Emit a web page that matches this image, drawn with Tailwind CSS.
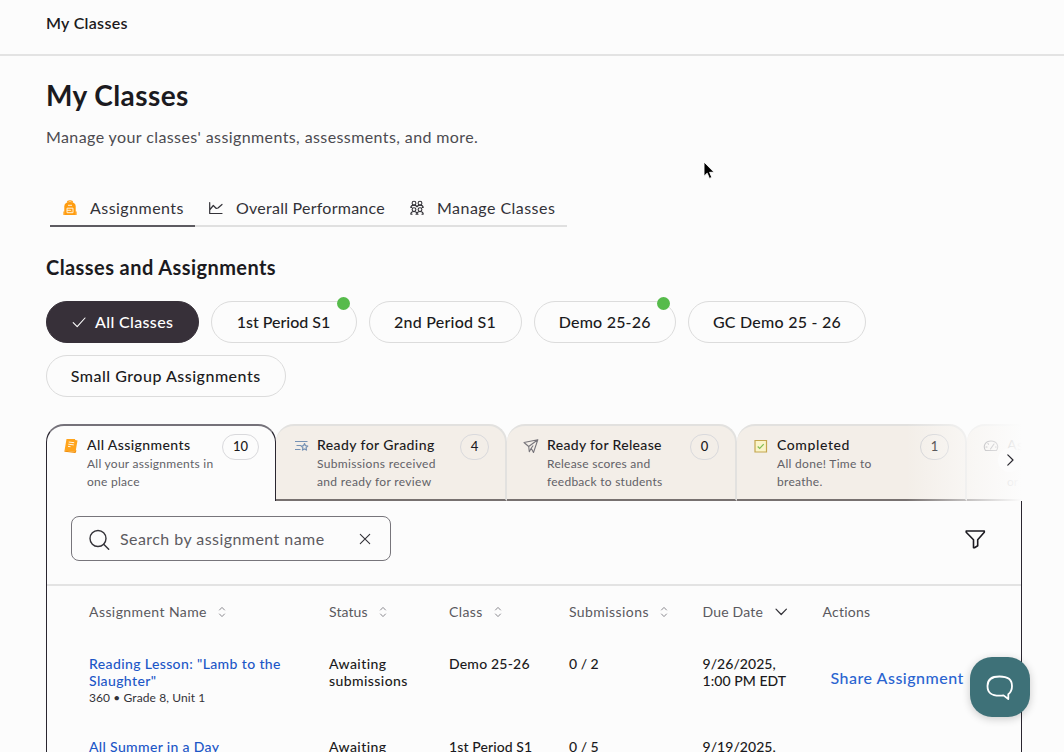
<!DOCTYPE html>
<html lang="en">
  <head>
    <meta charset="UTF-8" />
    <title>My Classes</title>
    <meta name="viewport" content="width=device-width, initial-scale=1.0" />
    <script src="https://cdn.jsdelivr.net/npm/@tailwindcss/browser@4"></script>
  </head>
  <body class="relative h-[752px] overflow-hidden bg-[#fcfcfc] font-['Lato',sans-serif] text-[#1b1a20]">
    <header class="flex h-14 items-center border-b-2 border-[#e3e3e3] pb-2 pl-[46px]">
      <span class="text-base font-semibold tracking-[0.3px]">My Classes</span>
    </header>

    <main class="h-[696px] overflow-hidden pl-[46px]">
      <h1 class="mt-[21px] text-[28px] leading-9 font-bold tracking-[0.42px]">My Classes</h1>
      <p class="mt-3 text-base leading-6 tracking-[0.4px] text-[#4c4b50]">Manage your classes' assignments, assessments, and more.</p>

      <!-- Section tabs -->
      <nav class="mt-[41.500px] ml-1 flex h-9 w-[516.500px] text-base text-[#333238]">
        <a class="flex w-[145px] items-center border-b-2 border-[#5d5b61] pl-3">
          <svg class="h-4 w-4" viewBox="0 0 16 16" fill="none">
            <path d="M5.500 2.500C5.500 1.200 6.500.8 8 .8s2.500.4 2.500 1.700" stroke="#ff9c0f" stroke-width="1.200" />
            <path d="M2.300 6.500C2.300 3.500 4.300 2 8 2s5.700 1.500 5.700 4.500V15H2.300z" fill="#ff9c0f" />
            <path d="M2 11.500v3.500M14 11.500v3.500" stroke="#ff9c0f" stroke-width="1.200" />
            <path d="M6 5.300h4M5 8.200h6v4.500H5zM5 10.300h3.500l.8.900" stroke="#fff3dc" stroke-width="1" />
          </svg>
          <span class="ml-3 tracking-[0.46px]">Assignments</span>
        </a>
        <a class="flex w-[201px] items-center border-b-2 border-[#e0e0e0] pl-[13px]">
          <svg class="h-4 w-4" viewBox="0 0 16 16" fill="none" stroke="#333238" stroke-width="1.200" stroke-linecap="round" stroke-linejoin="round">
            <path d="M1.700 2.500v11h12.300M2 9.500l3.300-4 3 3 1.700-.5 4-3.500" />
          </svg>
          <span class="ml-3 tracking-[0.25px]">Overall Performance</span>
        </a>
        <a class="flex w-[170.500px] items-center border-b-2 border-[#e0e0e0] pl-[13px]">
          <svg class="h-4 w-4" viewBox="0 0 16 16" fill="none" stroke="#333238" stroke-width="1.100">
            <circle cx="5" cy="3.200" r="1.900" /><circle cx="11" cy="3.200" r="1.900" />
            <path d="M1.700 7.700c.2-1.700 1.400-2.600 3.300-2.600s2.800.7 3 2.100c.2-1.400 1.100-2.100 3-2.100s3.100.9 3.300 2.600M1.500 7.500h1.700M12.800 7.500h1.700" />
            <circle cx="5" cy="9.600" r="1.900" /><circle cx="11" cy="9.600" r="1.900" />
            <path d="M1.700 14.300c.2-1.900 1.400-2.800 3.300-2.800s2.800.8 3 2.300c.2-1.500 1.100-2.300 3-2.300s3.100.9 3.300 2.800M1.500 14.300h2M12.500 14.300h2M6.500 14.300h3" />
          </svg>
          <span class="ml-3 tracking-[0.46px]">Manage Classes</span>
        </a>
      </nav>

      <h2 class="mt-[25.500px] text-xl leading-[30px] font-bold tracking-[0.42px]">Classes and Assignments</h2>

      <!-- Class filter pills -->
      <div class="mt-[18.500px] flex w-[900px] flex-wrap gap-x-3 gap-y-3 text-base font-medium">
        <button class="flex h-[42px] w-[152.500px] items-center rounded-full border border-[#373039] bg-[#373039] pl-6 text-white">
          <svg class="h-4 w-4" viewBox="0 0 16 16" fill="none" stroke="#fff" stroke-width="1.100" stroke-linecap="round" stroke-linejoin="round"><path d="M2.200 8.600l4 4L14 4" /></svg>
          <span class="ml-2 tracking-[0.36px]">All Classes</span>
        </button>
        <button class="relative h-[42px] w-[146px] rounded-full border border-[#dcdcdc]">
          1st Period S1
          <span class="absolute -top-[5px] right-[6px] h-[13px] w-[13px] rounded-full bg-[#56bb4b]"></span>
        </button>
        <button class="h-[42px] w-[153px] rounded-full border border-[#dcdcdc] tracking-[0.25px]">2nd Period S1</button>
        <button class="relative h-[42px] w-[142.500px] rounded-full border border-[#dcdcdc] tracking-[0.2px]">
          Demo 25-26
          <span class="absolute -top-[5px] right-[5px] h-[13px] w-[13px] rounded-full bg-[#56bb4b]"></span>
        </button>
        <button class="h-[42px] w-[178px] rounded-full border border-[#dcdcdc] tracking-[0.25px]">GC Demo 25 - 26</button>
        <button class="h-[42px] w-[239.500px] rounded-full border border-[#dcdcdc] tracking-[0.5px]">Small Group Assignments</button>
      </div>

      <!-- Status cards -->
      <div class="relative mt-[27.500px] h-[76.500px] w-[976px] overflow-hidden">
        <div class="flex h-full w-[1150px]">
          <div class="flex w-[230px] shrink-0 rounded-t-[18px] border-x border-t-2 border-x-[#2a2630] border-t-[#75727a] pt-[9px] pl-4">
            <svg class="mt-[3px] h-4 w-4" viewBox="0 0 16 16" fill="none">
              <path d="M3.500 1h8.500l.2 1 2.300.5-2 11.500-11-1.200z" fill="#ffa41c" />
              <path d="M1.400 13.200l11 1.300.5-2.200" stroke="#f28b00" />
              <path d="M5.700 4l5.500.7M5.300 6.200l5.500.7M5 8.400l2.500.3" stroke="#fff6e6" />
            </svg>
            <div class="ml-2 w-[134px]">
              <h3 class="text-sm leading-5 font-medium tracking-[0.4px]">All Assignments</h3>
              <p class="text-xs leading-[18px] tracking-[0.26px] text-[#626167]">All your assignments in<br />one place</p>
            </div>
            <span class="-mt-px ml-px flex h-[26px] w-[37px] items-center justify-center rounded-full border border-[#d9d9dc] text-[13px] font-medium">10</span>
          </div>

          <div class="flex w-[230.500px] shrink-0 rounded-t-[18px] border-r-2 border-t-2 border-[#e2e1df] border-b-2 border-b-[#777170] bg-[#f3eee8] pt-[9px] pl-[17px]">
            <svg class="mt-[3px] h-4 w-4" viewBox="0 0 16 16" fill="none" stroke="#7692b4" stroke-width="1.200" stroke-linejoin="round">
              <path d="M2 3.500h12.500M3.500 7.500h4.500M2 11.500h5.500" />
              <path d="M11.500 5.500l1 2.200 2.300.3-1.700 1.700.4 2.400-2-1.200-2 1.200.4-2.400L8.200 8l2.300-.3z" />
            </svg>
            <div class="ml-2 w-[134px]">
              <h3 class="text-sm leading-5 font-medium tracking-[0.41px]">Ready for Grading</h3>
              <p class="text-xs leading-[18px] tracking-[0.34px] text-[#626167]">Submissions received<br />and ready for review</p>
            </div>
            <span class="-mt-px ml-[9px] flex h-[26px] w-[29px] items-center justify-center rounded-full border border-[#d9d9dc] text-[13px] font-medium">4</span>
          </div>

          <div class="flex w-[230px] shrink-0 rounded-t-[18px] border-r-2 border-t-2 border-[#e2e1df] border-b-2 border-b-[#777170] bg-[#f3eee8] pt-[9px] pl-[16.500px]">
            <svg class="mt-[3px] h-4 w-4" viewBox="0 0 16 16" fill="none" stroke="#77757b" stroke-width="1.100" stroke-linejoin="round">
              <path d="M14.800 1.700L1 4.500l4.700 4zM14.800 1.700L10.500 14.500l-2.300-4.200M5.700 8.500l.6 5.300 1.900-3.500 2-2.800" />
            </svg>
            <div class="ml-2 w-[134px]">
              <h3 class="text-sm leading-5 font-medium tracking-[0.33px]">Ready for Release</h3>
              <p class="text-xs leading-[18px] tracking-[0.25px] text-[#626167]">Release scores and<br />feedback to students</p>
            </div>
            <span class="-mt-px ml-[9px] flex h-[26px] w-[29px] items-center justify-center rounded-full border border-[#d9d9dc] text-[13px] font-medium">0</span>
          </div>

          <div class="flex w-[230px] shrink-0 rounded-t-[18px] border-r-2 border-t-2 border-[#e2e1df] border-b-2 border-b-[#777170] bg-[#f3eee8] pt-[9px] pl-[16.500px]">
            <svg class="mt-[3px] h-4 w-4" viewBox="0 0 16 16" fill="none">
              <path d="M2 2.500h11.500v11.500H2z" fill="#faf4c9" stroke="#c3a64e" stroke-width="1.200" />
              <path d="M4.700 8.500l2 2 4-4.300" stroke="#82bd56" stroke-width="1.200" />
            </svg>
            <div class="ml-2 w-[134px]">
              <h3 class="text-sm leading-5 font-medium tracking-[0.6px]">Completed</h3>
              <p class="text-xs leading-[18px] tracking-[0.3px] text-[#626167]">All done! Time to<br />breathe.</p>
            </div>
            <span class="-mt-px ml-[9px] flex h-[26px] w-[29px] items-center justify-center rounded-full border border-[#d0d0d3] text-[13px] font-medium">1</span>
          </div>

          <div class="flex w-[230px] shrink-0 rounded-t-[18px] border-r-2 border-t-2 border-[#e2e1df] border-b-2 border-b-[#777170] bg-[#f3eee8] pt-[9px] pl-[16.500px]">
            <svg class="mt-[3px] h-4 w-4" viewBox="0 0 16 16" fill="none" stroke="#55535a" stroke-width="1.100" stroke-linecap="round" stroke-linejoin="round">
              <path d="M2.500 12.500C-.5 8 2.500 3 8 3s8.500 5 5.500 9.500zM7.500 11l3.500-5M3 9h1M5 5.500l.5.700M12.500 9h.7" />
            </svg>
            <div class="ml-2">
              <h3 class="text-sm leading-5 font-medium tracking-[0.4px]">As</h3>
              <p class="text-xs leading-[18px] text-[#626167]"><br />or</p>
            </div>
          </div>
        </div>
        <div class="absolute inset-y-0 right-0 w-[116px] bg-linear-to-r from-[#fcfcfc]/0 via-[#fcfcfc]/50 via-45% to-[#fcfcfc]"></div>
        <button class="absolute top-[24px] right-0 flex h-6 w-6 items-center justify-center rounded-full bg-[#fcfcfc]">
          <svg class="h-4 w-4" viewBox="0 0 16 16" fill="none" stroke="#2a2930" stroke-width="1.200" stroke-linecap="round" stroke-linejoin="round"><path d="M5.800 2.800L11 8l-5.200 5.200" /></svg>
        </button>
      </div>

      <!-- Assignments table -->
      <section class="h-[260px] w-[976px] border-x border-[#2a2630]">
        <div class="flex h-[83.500px] items-start justify-between pt-[15.500px] pr-[34px] pl-6">
          <div class="flex h-[45px] w-80 items-center rounded-lg border border-[#77757b] pl-4 text-base text-[#5c5b61]">
            <svg class="mt-0.5 h-6 w-6" viewBox="0 0 24 24" fill="none" stroke="#333238" stroke-width="1.400" stroke-linecap="round"><circle cx="10" cy="10.500" r="8" /><path d="M15.700 16.200l5 5" /></svg>
            <span class="ml-2 w-[233px] tracking-[0.44px]">Search by assignment name</span>
            <svg class="ml-1 h-4 w-4" viewBox="0 0 16 16" fill="none" stroke="#333238" stroke-width="1.100" stroke-linecap="round"><path d="M3.300 3.300l9.400 9.400M12.700 3.300l-9.400 9.400" /></svg>
          </div>
          <svg class="mt-[11px] h-6 w-6" viewBox="0 0 24 24" fill="none" stroke="#1b1a20" stroke-width="1.600" stroke-linejoin="round"><path d="M3.200 4h18.100v1.200l-6.600 7.600v6l-3.200 2h-1v-8L3.200 5.200z" /></svg>
        </div>

        <div class="grid h-14 grid-cols-[240px_120px_120px_133.500px_120px_1fr] items-center border-t-2 border-[#e3e3e3] pb-0.5 pl-[42px] text-sm tracking-[0.42px] text-[#5a595e]">
          <div class="flex items-center gap-[9px]">Assignment Name
            <svg class="h-3 w-3" viewBox="0 0 12 12" fill="none" stroke="#8b8a90" stroke-linecap="round" stroke-linejoin="round"><path d="M3.500 4L6 1.400 8.500 4M3.500 8L6 10.600 8.500 8" /></svg>
          </div>
          <div class="flex items-center gap-[9px] tracking-[0.1px]">Status
            <svg class="h-3 w-3" viewBox="0 0 12 12" fill="none" stroke="#8b8a90" stroke-linecap="round" stroke-linejoin="round"><path d="M3.500 4L6 1.400 8.500 4M3.500 8L6 10.600 8.500 8" /></svg>
          </div>
          <div class="flex items-center gap-[9px]">Class
            <svg class="h-3 w-3" viewBox="0 0 12 12" fill="none" stroke="#8b8a90" stroke-linecap="round" stroke-linejoin="round"><path d="M3.500 4L6 1.400 8.500 4M3.500 8L6 10.600 8.500 8" /></svg>
          </div>
          <div class="flex items-center gap-[9px]">Submissions
            <svg class="h-3 w-3" viewBox="0 0 12 12" fill="none" stroke="#8b8a90" stroke-linecap="round" stroke-linejoin="round"><path d="M3.500 4L6 1.400 8.500 4M3.500 8L6 10.600 8.500 8" /></svg>
          </div>
          <div class="flex items-center gap-2.5 tracking-[0.2px]">Due Date
            <svg class="h-4 w-4" viewBox="0 0 16 16" fill="none" stroke="#333238" stroke-width="1.200" stroke-linecap="round" stroke-linejoin="round"><path d="M3 5.200l5.200 5.300L13.400 5.200" /></svg>
          </div>
          <div class="tracking-[0.25px]">Actions</div>
        </div>

        <div class="grid h-[83px] grid-cols-[240px_120px_120px_133.500px_120px_1fr] pt-[14.500px] pl-[42px] text-sm leading-[17.5px] font-medium">
          <div>
            <a class="block w-[210px] tracking-[0.38px] text-[#1c57c7]">Reading Lesson: "Lamb to the Slaughter"</a>
            <p class="text-xs leading-[15px] font-normal tracking-[0.1px] text-[#333238]">360 • Grade 8, Unit 1</p>
          </div>
          <div class="tracking-[0.42px]">Awaiting<br />submissions</div>
          <div class="tracking-[0.2px]">Demo 25-26</div>
          <div>0 / 2</div>
          <div class="tracking-[0.05px]">9/26/2025,<br />1:00 PM EDT</div>
          <a class="pt-[13px] pl-2 text-base leading-5 tracking-[0.5px] text-[#2a64d0]">Share Assignment</a>
        </div>

        <div class="grid h-[83px] grid-cols-[240px_120px_120px_133.500px_120px_1fr] pt-[14.500px] pl-[42px] text-sm leading-[17.5px] font-medium">
          <a class="tracking-[0.34px] text-[#1c57c7]">All Summer in a Day</a>
          <div class="tracking-[0.42px]">Awaiting</div>
          <div class="tracking-[0.1px]">1st Period S1</div>
          <div>0 / 5</div>
          <div class="tracking-[0.05px]">9/19/2025,</div>
        </div>
      </section>
    </main>

    <!-- Chat launcher -->
    <button class="absolute top-[657px] left-[970px] flex h-[60px] w-[60px] items-center justify-center rounded-[22px] bg-[#3e7178] shadow-[0_2px_8px_rgba(0,0,0,0.2)]">
      <svg class="h-8 w-8" viewBox="0 0 32 32" fill="none" stroke="#fff" stroke-width="1.800" stroke-linejoin="round">
        <path d="M15.500 5.500c8.500 0 12.500 2.800 12.500 9.500 0 4-1.200 6.500-3.700 8.200v4.800l-4.800-3.600c-1.200.2-2.600.3-4 .3-8.200 0-12-3-12-9.700s3.800-9.500 12-9.500z" />
      </svg>
    </button>

    <!-- Pointer -->
    <svg class="absolute top-[161px] left-[702px] h-5 w-4" viewBox="0 0 16 20"><path d="M2 1v14.200l3.200-3 2.200 5.200 2.400-1-2.200-5.100h4.500z" fill="#000" stroke="#fff" stroke-width=".9" /></svg>
  </body>
</html>
